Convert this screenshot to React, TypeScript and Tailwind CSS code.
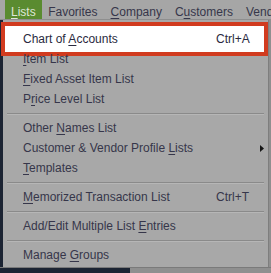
import React from 'react';

type Item =
  | { kind: 'item'; pre: string; key: string; post: string; shortcut?: string; sub?: boolean }
  | { kind: 'sep' };

const items: Item[] = [
  { kind: 'item', pre: '', key: 'I', post: 'tem List' },
  { kind: 'item', pre: '', key: 'F', post: 'ixed Asset Item List' },
  { kind: 'item', pre: 'P', key: 'r', post: 'ice Level List' },
  { kind: 'sep' },
  { kind: 'item', pre: 'Other ', key: 'N', post: 'ames List' },
  { kind: 'item', pre: 'Customer & Vendor Profile ', key: 'L', post: 'ists', sub: true },
  { kind: 'item', pre: '', key: 'T', post: 'emplates' },
  { kind: 'sep' },
  { kind: 'item', pre: '', key: 'M', post: 'emorized Transaction List', shortcut: 'Ctrl+T' },
  { kind: 'sep' },
  { kind: 'item', pre: 'Add/Edit Multiple List ', key: 'E', post: 'ntries' },
  { kind: 'sep' },
  { kind: 'item', pre: 'Manage ', key: 'G', post: 'roups' },
];

function Row({ pre, k, post, shortcut, sub }: { pre: string; k: string; post: string; shortcut?: string; sub?: boolean }) {
  return (
    <div className="relative flex h-[20px] items-center pl-[20px] leading-[20px]">
      <span className="w-[193px] whitespace-nowrap">
        {pre}
        <span className="underline underline-offset-2">{k}</span>
        {post}
      </span>
      {shortcut && <span>{shortcut}</span>}
      {sub && (
        <svg className="absolute left-[257px] top-[7px]" width="4" height="7" viewBox="0 0 4 7">
          <path d="M0 0 L4 3.5 L0 7 Z" fill="#151515" />
        </svg>
      )}
    </div>
  );
}

export default function App() {
  return (
    <div
      className="relative h-[273px] w-[271px] overflow-hidden bg-[#1c2433] text-[12px] text-[#36364a]"
      style={{ fontFamily: '"Liberation Sans", Arial, sans-serif' }}
    >
      {/* menu bar */}
      <div className="flex h-[20px] overflow-hidden whitespace-nowrap border-b border-[#8e8e8e] bg-[#a6a6a6] pl-[5px] leading-[19px]">
        <span className="h-[19px] bg-[#5a8b30] px-[6px] pt-[3px] text-[#dfe6d8]">
          <span className="underline underline-offset-2">L</span>ists
        </span>
        <span className="px-[6.5px] pt-[3px]">Favorites</span>
        <span className="px-[6.5px] pt-[3px]">
          <span className="underline underline-offset-2">C</span>ompany
        </span>
        <span className="px-[6.5px] pt-[3px]">
          C<span className="underline underline-offset-2">u</span>stomers
        </span>
        <span className="pl-[6.5px] pt-[3px]">Vend</span>
      </div>

      <div className="flex">
        <div className="w-[3px]" />
        <div className="w-[266px] border-r border-[#7e7e7e] bg-[#a8a8a8] pb-[2px] pt-[9px]">
          {/* highlighted item */}
          <div className="relative h-[20px]">
            <div className="absolute left-[-2px] top-[-7px] h-[34px] w-[267px] border-[4px] border-[#d13b1f] bg-white" />
            <div className="relative flex h-[20px] items-center pl-[20px] leading-[20px] text-[#2a2a3e]">
              <span className="w-[193px] whitespace-nowrap">
                Chart of <span className="underline underline-offset-2">A</span>ccounts
              </span>
              <span>Ctrl+A</span>
            </div>
          </div>
          {items.map((it, i) =>
            it.kind === 'sep' ? (
              <div key={i} className="flex h-[9px] items-center px-[4px]">
                <div className="h-[2px] w-full border-t border-b border-t-[#8a8a8a] border-b-[#b6b6b6]" />
              </div>
            ) : (
              <Row key={i} pre={it.pre} k={it.key} post={it.post} shortcut={it.shortcut} sub={it.sub} />
            )
          )}
        </div>
        <div className="w-[2px] bg-[#8f8f8f]" />
      </div>

      <div className="flex h-[6px] border-t border-[#7a7a7a]">
        <div className="w-[130px] bg-[#1c2433]" />
        <div className="flex-1 bg-[#8f8f8f]" />
      </div>
    </div>
  );
}
